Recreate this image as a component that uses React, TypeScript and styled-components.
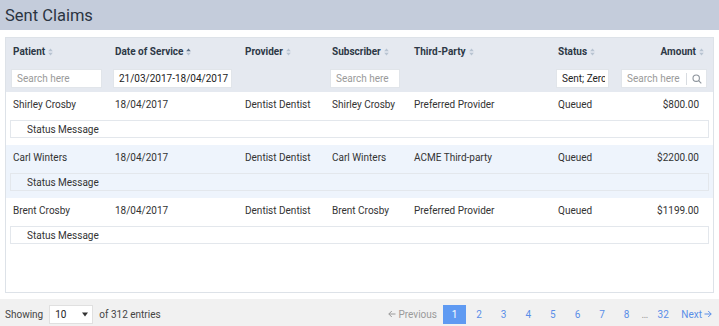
import React from 'react';
import styled, { createGlobalStyle } from 'styled-components';

const GlobalStyle = createGlobalStyle`
  html, body {
    margin: 0;
    padding: 0;
    background: #ffffff;
  }
  body {
    font-family: Roboto, "Liberation Sans", sans-serif;
    color: #333;
  }
`;

const Page = styled.div`
  width: 719px;
  height: 326px;
  display: flex;
  flex-direction: column;
  overflow: hidden;
`;

const TitleBar = styled.div`
  height: 30px;
  flex: none;
  background-color: #c4ccdb;
  display: flex;
  align-items: center;
  padding: 0 5px;
  font-size: 16.5px;
  color: #2b3441;
`;

const Content = styled.div`
  flex: 1;
  padding: 7px 5px 6px;
  display: flex;
`;

const Panel = styled.div`
  flex: 1;
  border: 1px solid #dde2e8;
  overflow: hidden;
`;

const Table = styled.table`
  width: 100%;
  border-collapse: collapse;
  table-layout: fixed;
  font-size: 10px;
`;

const HeadCell = styled.th<{ $right?: boolean }>`
  height: 26px;
  padding: 0 ${p => (p.$right ? '9px' : '7px')} 0 7px;
  background-color: #e5e9f0;
  color: #2d3846;
  font-weight: 700;
  text-align: ${p => (p.$right ? 'right' : 'left')};
  vertical-align: middle;
  white-space: nowrap;
`;

const FilterCell = styled.td`
  height: 28px;
  padding: 0 5px;
  background-color: #e5e9f0;
  vertical-align: top;
`;

const SearchInput = styled.div<{ $w: number; $filled?: boolean }>`
  width: ${p => p.$w}px;
  height: 19px;
  margin-top: 5px;
  box-sizing: border-box;
  background: #fff;
  border: 1px solid #e1e5ea;
  display: flex;
  align-items: center;
  padding: 0 4px 0 5px;
  font-size: 10px;
  color: ${p => (p.$filled ? '#222' : '#9a9a9a')};
  white-space: nowrap;
  overflow: hidden;
`;

const InputText = styled.span`
  overflow: hidden;
  flex: none;
`;

const SearchIconBox = styled.span`
  margin-left: auto;
  height: 12px;
  padding-left: 5px;
  border-left: 1px solid #d8dce1;
  display: flex;
  align-items: center;
`;

const Group = styled.tbody<{ $alt?: boolean }>`
  background-color: ${p => (p.$alt ? '#eef4fc' : '#ffffff')};
`;

const DataCell = styled.td<{ $right?: boolean }>`
  height: 25px;
  padding: 0 ${p => (p.$right ? '14px' : '7px')} 0 7px;
  text-align: ${p => (p.$right ? 'right' : 'left')};
  vertical-align: middle;
  white-space: nowrap;
  color: #333;
`;

const MessageCell = styled.td`
  padding: 3px 4px 7px;
`;

const MessageBox = styled.div`
  height: 18px;
  box-sizing: border-box;
  border: 1px solid #e3e7ec;
  display: flex;
  align-items: center;
  padding-left: 16px;
  color: #333;
`;

const Footer = styled.div`
  height: 27px;
  flex: none;
  box-sizing: border-box;
  background-color: #f1f1f1;
  display: flex;
  align-items: center;
  padding: 3px 7px 0 5px;
  font-size: 10px;
  color: #444;
`;

const LengthSelect = styled.div`
  width: 44px;
  height: 19px;
  box-sizing: border-box;
  margin: 0 6px 0 6px;
  background: #fff;
  border: 1px solid #e0e0e0;
  display: flex;
  align-items: center;
  justify-content: space-between;
  padding: 0 4px 0 5px;
  color: #222;
`;

const Pager = styled.div`
  margin-left: auto;
  display: flex;
  align-items: center;
`;

const PageLink = styled.span<{ $active?: boolean }>`
  width: 23px;
  height: 19px;
  margin-right: 1.6px;
  display: flex;
  align-items: center;
  justify-content: center;
  color: ${p => (p.$active ? '#fff' : '#5a8ee8')};
  background-color: ${p => (p.$active ? '#5f9af2' : 'transparent')};
`;

const Ellipsis = styled.span`
  width: 10px;
  margin-right: 2px;
  text-align: center;
  color: #9a9a9a;
`;

const NavLink = styled.span<{ $muted?: boolean; $next?: boolean }>`
  display: flex;
  align-items: center;
  gap: 2px;
  margin: ${p => (p.$next ? '0 0 0 5px' : '0 6px 0 0')};
  color: ${p => (p.$muted ? '#9a9a9a' : '#5a8ee8')};
`;

const SortIcon: React.FC<{ active?: boolean }> = ({ active }) => (
  <svg width="5" height="8" viewBox="0 0 5 8" style={{ marginLeft: 3, verticalAlign: -1 }}>
    <path d="M2.5 0.5 L4.8 3.3 L0.2 3.3 Z" fill={active ? '#5d6f86' : '#b8c3d1'} />
    <path d="M2.5 7.5 L4.8 4.7 L0.2 4.7 Z" fill="#b8c3d1" />
  </svg>
);

const Arrow: React.FC<{ left?: boolean; color: string }> = ({ left, color }) => (
  <svg width="8" height="8" viewBox="0 0 8 8" fill="none" stroke={color} strokeWidth="1"
    style={{ transform: left ? 'scaleX(-1)' : undefined }}>
    <path d="M0.5 4 H7.2 M4.2 1 L7.2 4 L4.2 7" />
  </svg>
);

const MagnifierIcon = () => (
  <svg width="10" height="10" viewBox="0 0 10 10" fill="none" stroke="#8d949c" strokeWidth="1.1">
    <circle cx="4.2" cy="4.2" r="3.2" />
    <path d="M6.6 6.6 L9.3 9.3" />
  </svg>
);

const claims = [
  { patient: 'Shirley Crosby', date: '18/04/2017', provider: 'Dentist Dentist', subscriber: 'Shirley Crosby', party: 'Preferred Provider', status: 'Queued', amount: '$800.00' },
  { patient: 'Carl Winters', date: '18/04/2017', provider: 'Dentist Dentist', subscriber: 'Carl Winters', party: 'ACME Third-party', status: 'Queued', amount: '$2200.00' },
  { patient: 'Brent Crosby', date: '18/04/2017', provider: 'Dentist Dentist', subscriber: 'Brent Crosby', party: 'Preferred Provider', status: 'Queued', amount: '$1199.00' },
];

const pages = ['2', '3', '4', '5', '6', '7', '8'];

const App: React.FC = () => (
  <Page>
    <GlobalStyle />
    <TitleBar>Sent Claims</TitleBar>
    <Content>
      <Panel>
        <Table>
          <colgroup>
            <col style={{ width: 102 }} />
            <col style={{ width: 130 }} />
            <col style={{ width: 87 }} />
            <col style={{ width: 82 }} />
            <col style={{ width: 144 }} />
            <col style={{ width: 63 }} />
            <col />
          </colgroup>
          <thead>
            <tr>
              <HeadCell>Patient<SortIcon /></HeadCell>
              <HeadCell>Date of Service<SortIcon active /></HeadCell>
              <HeadCell>Provider<SortIcon /></HeadCell>
              <HeadCell>Subscriber<SortIcon /></HeadCell>
              <HeadCell>Third-Party<SortIcon /></HeadCell>
              <HeadCell>Status<SortIcon /></HeadCell>
              <HeadCell $right>Amount<SortIcon /></HeadCell>
            </tr>
            <tr>
              <FilterCell><SearchInput $w={91}>Search here</SearchInput></FilterCell>
              <FilterCell><SearchInput $w={119} $filled>21/03/2017-18/04/2017</SearchInput></FilterCell>
              <FilterCell />
              <FilterCell><SearchInput $w={70}>Search here</SearchInput></FilterCell>
              <FilterCell />
              <FilterCell>
                <SearchInput $w={53} $filled>
                  <InputText style={{ width: 43 }}>Sent; Zero</InputText>
                </SearchInput>
              </FilterCell>
              <FilterCell>
                <SearchInput $w={86} style={{ marginLeft: 2 }}>
                  Search here
                  <SearchIconBox><MagnifierIcon /></SearchIconBox>
                </SearchInput>
              </FilterCell>
            </tr>
          </thead>
          {claims.map((c, i) => (
            <Group key={c.patient} $alt={i % 2 === 1}>
              <tr>
                <DataCell>{c.patient}</DataCell>
                <DataCell>{c.date}</DataCell>
                <DataCell>{c.provider}</DataCell>
                <DataCell>{c.subscriber}</DataCell>
                <DataCell>{c.party}</DataCell>
                <DataCell>{c.status}</DataCell>
                <DataCell $right>{c.amount}</DataCell>
              </tr>
              <tr>
                <MessageCell colSpan={7}>
                  <MessageBox>Status Message</MessageBox>
                </MessageCell>
              </tr>
            </Group>
          ))}
        </Table>
      </Panel>
    </Content>
    <Footer>
      Showing
      <LengthSelect>
        10
        <svg width="6" height="5" viewBox="0 0 6 5"><path d="M0 0.5 H6 L3 4.5 Z" fill="#333" /></svg>
      </LengthSelect>
      of 312 entries
      <Pager>
        <NavLink $muted><Arrow left color="#9a9a9a" />Previous</NavLink>
        <PageLink $active>1</PageLink>
        {pages.map(p => <PageLink key={p}>{p}</PageLink>)}
        <Ellipsis>…</Ellipsis>
        <PageLink>32</PageLink>
        <NavLink $next>Next<Arrow color="#5a8ee8" /></NavLink>
      </Pager>
    </Footer>
  </Page>
);

export default App;
